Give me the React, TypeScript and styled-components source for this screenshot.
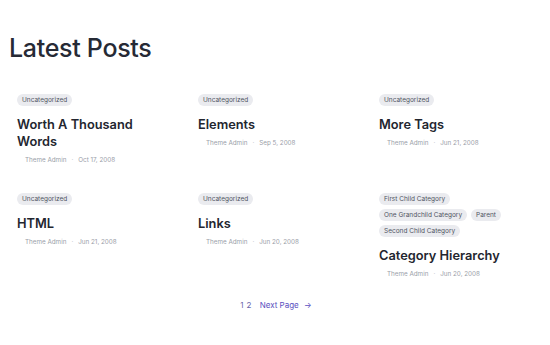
import styled, { createGlobalStyle } from 'styled-components';

type Post = {
  title: string
  tags: string[]
  date: string
}

const posts: Post[] = [
  { title: "Worth A Thousand Words", tags: ["Uncategorized"], date: "Oct 17, 2008" },
  { title: "Elements", tags: ["Uncategorized"], date: "Sep 5, 2008" },
  { title: "More Tags", tags: ["Uncategorized"], date: "Jun 21, 2008" },
  { title: "HTML", tags: ["Uncategorized"], date: "Jun 21, 2008" },
  { title: "Links", tags: ["Uncategorized"], date: "Jun 20, 2008" },
  {
    title: "Category Hierarchy",
    tags: ["First Child Category", "One Grandchild Category", "Parent", "Second Child Category"],
    date: "Jun 20, 2008",
  },
]

const App = () => {
  return (
    <Page>
      <GlobalStyle />
      <Heading>Latest Posts</Heading>
      <Grid>
        {posts.map(post => (
          <Card key={post.title}>
            <Tags>
              {post.tags.map(tag => <Tag key={tag}>{tag}</Tag>)}
            </Tags>
            <Title>{post.title}</Title>
            <Meta>
              <span>Theme Admin</span>
              <Dot>·</Dot>
              <span>{post.date}</span>
            </Meta>
          </Card>
        ))}
      </Grid>
      <Pagination>
        <Pages>1 2</Pages>
        <NextLink href="#">Next Page <Arrow>→</Arrow></NextLink>
      </Pagination>
    </Page>
  )
}

export default App

const GlobalStyle = createGlobalStyle`
  body {
    margin:0;
    background:#fff;
    font-family:Inter, "Noto Sans", sans-serif;
    color:#1f2430;
  }
`

const Page = styled.main`
  padding:31px 9px 0 9px;
`

const Heading = styled.h1`
  margin:0 0 29px 0;
  font-size:25px;
  font-weight:500;
  line-height:34px;
  letter-spacing:-0.3px;
  color:#262a35;
`

const Grid = styled.section`
  display:grid;
  grid-template-columns:repeat(3, 170px);
  column-gap:11px;
  row-gap:28px;
  padding-left:8px;
`

const Card = styled.article`
  display:flex;
  flex-direction:column;
  align-items:flex-start;
  width:150px;
`

const Tags = styled.div`
  display:flex;
  flex-wrap:wrap;
  gap:4px 4px;
  margin-bottom:10px;
`

const Tag = styled.span`
  display:inline-block;
  height:12px;
  line-height:12px;
  padding:0 5px;
  border-radius:6px;
  background:#eaebef;
  color:#4f5462;
  font-size:6.5px;
  font-weight:400;
  white-space:nowrap;
`

const Title = styled.h2`
  margin:0 0 5px 0;
  font-size:12.8px;
  font-weight:600;
  line-height:17px;
  color:#23262f;
`

const Meta = styled.div`
  display:flex;
  gap:5px;
  padding-left:8px;
  font-size:6.3px;
  line-height:10px;
  color:#9a9ea8;
`

const Dot = styled.span`
  color:#b5b8c0;
`

const Pagination = styled.nav`
  display:flex;
  justify-content:center;
  align-items:center;
  gap:8px;
  margin-top:21px;
  font-size:8px;
  padding-left:2px;
`

const Pages = styled.span`
  color:#6a64a8;
  letter-spacing:0.3px;
`

const NextLink = styled.a`
  color:#5a4fc0;
  text-decoration:none;
`

const Arrow = styled.span`
  margin-left:3px;
`
